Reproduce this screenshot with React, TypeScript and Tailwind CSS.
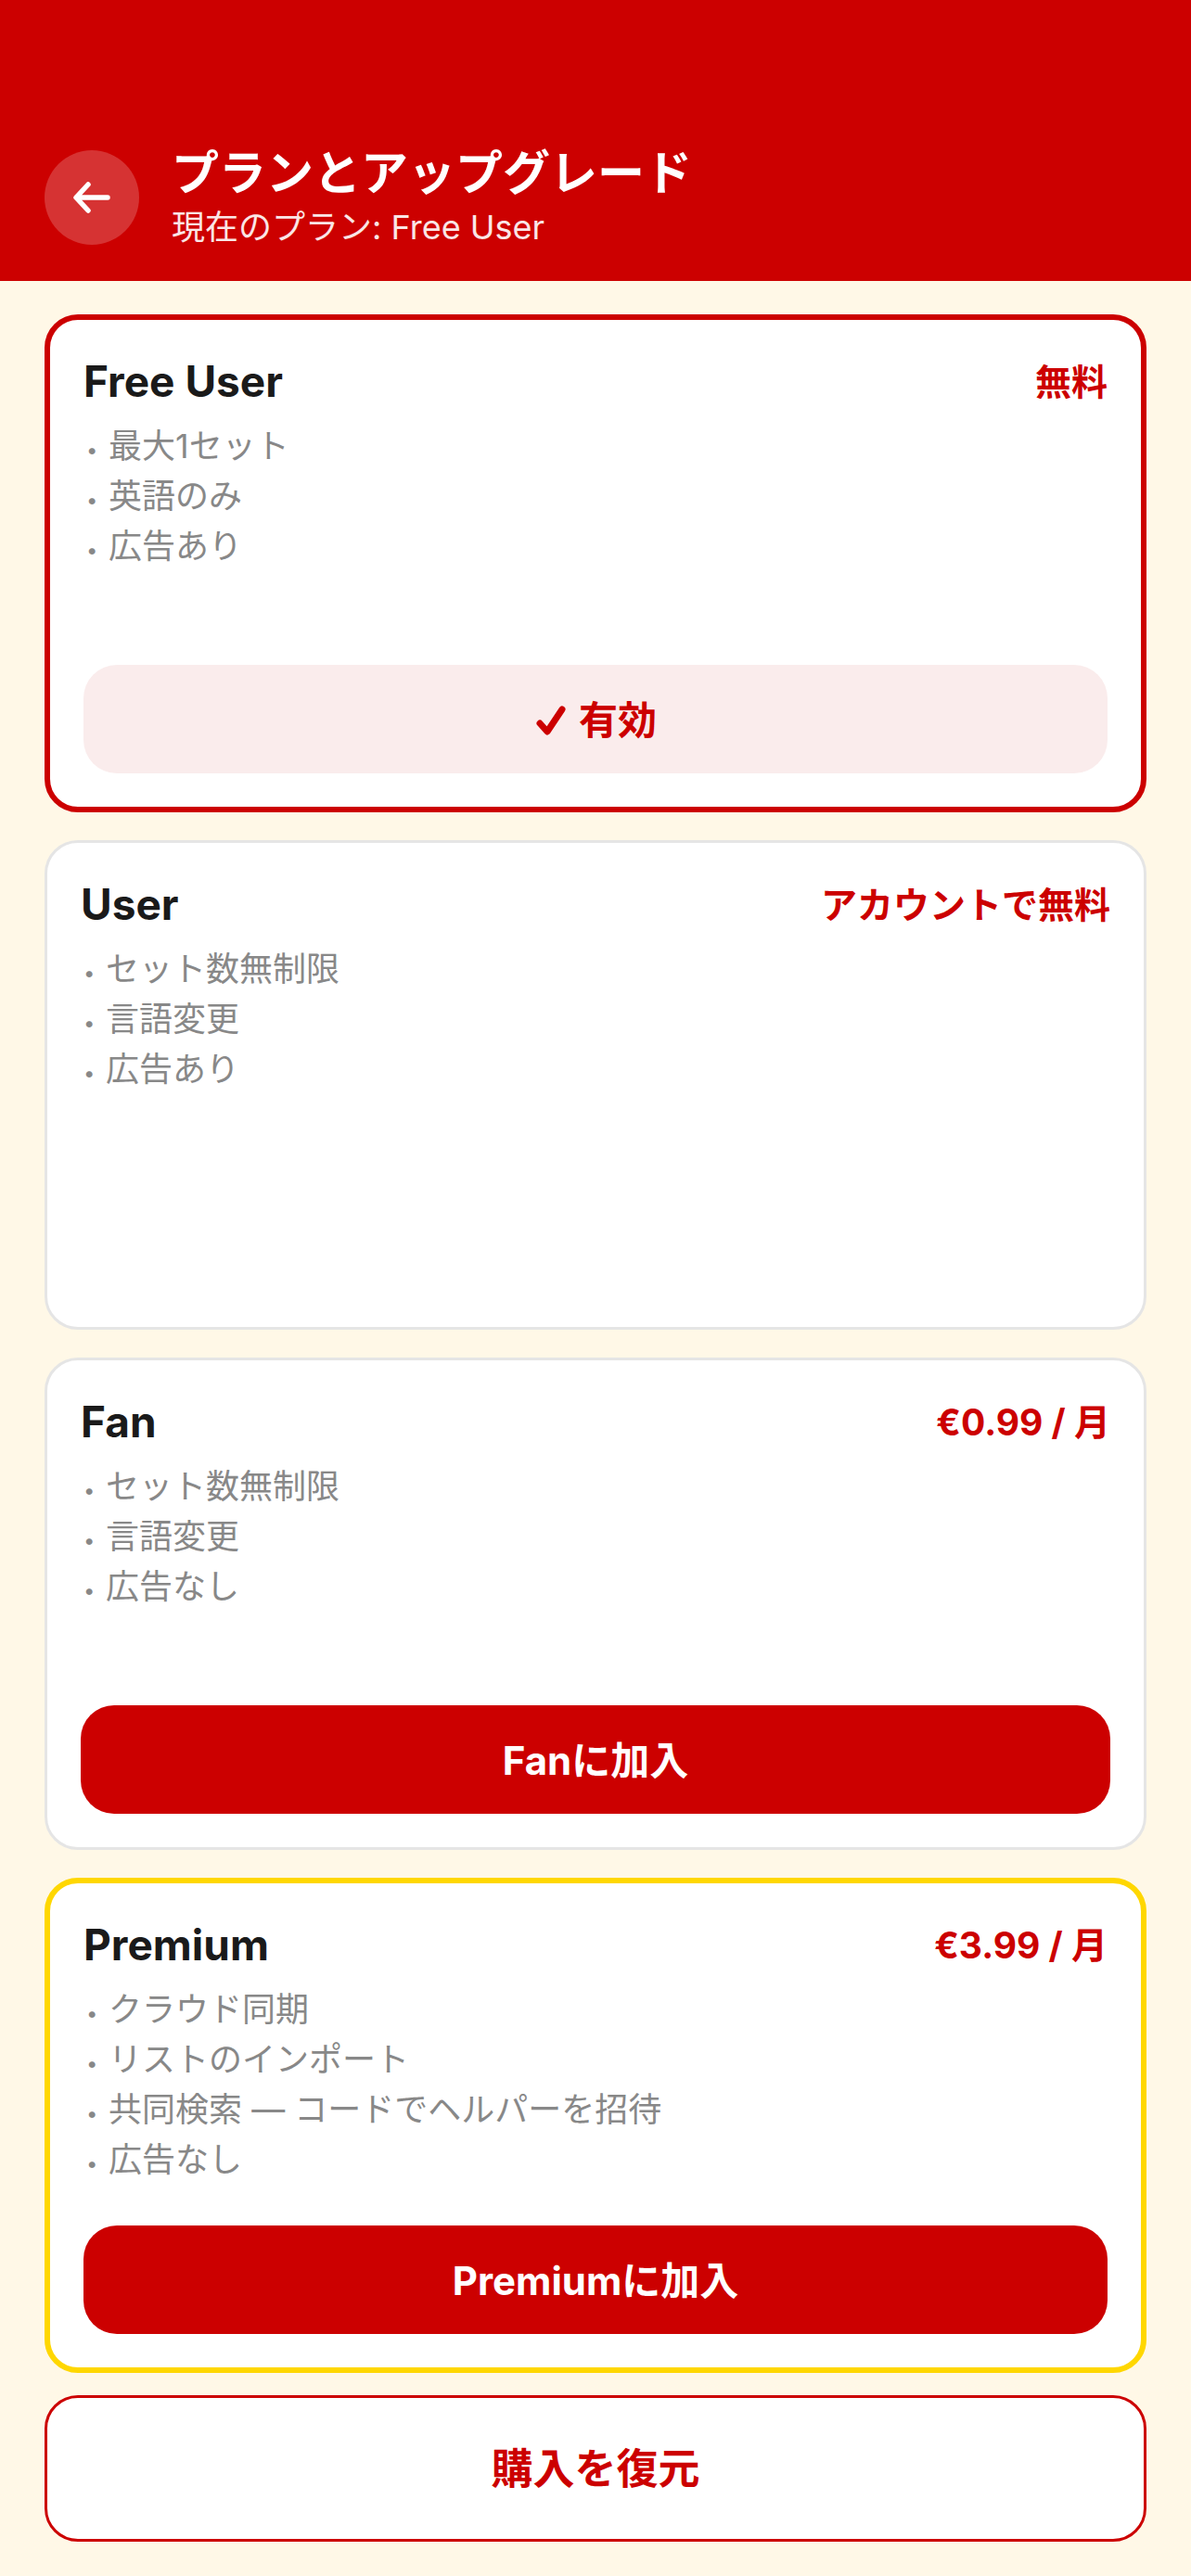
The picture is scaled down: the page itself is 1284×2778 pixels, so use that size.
import React from "react";

const FONT = "font-['Inter','Noto_Sans_CJK_JP',sans-serif]";

type Plan = {
  name: string;
  price: string;
  items: string[];
  border: string;
  height: string;
  button?: string;
  active?: boolean;
};

const plans: Plan[] = [
  {
    name: "Free User",
    price: "無料",
    items: ["最大1セット", "英語のみ", "広告あり"],
    border: "border-[6px] border-[#cc0000]",
    height: "h-[537px]",
    active: true,
  },
  {
    name: "User",
    price: "アカウントで無料",
    items: ["セット数無制限", "言語変更", "広告あり"],
    border: "border-[3px] border-[#e5e5e5]",
    height: "h-[528px]",
  },
  {
    name: "Fan",
    price: "€0.99 / 月",
    items: ["セット数無制限", "言語変更", "広告なし"],
    border: "border-[3px] border-[#e5e5e5]",
    height: "h-[531px]",
    button: "Fanに加入",
  },
  {
    name: "Premium",
    price: "€3.99 / 月",
    items: ["クラウド同期", "リストのインポート", "共同検索 — コードでヘルパーを招待", "広告なし"],
    border: "border-[6px] border-[#ffd700]",
    height: "h-[534px]",
    button: "Premiumに加入",
  },
];

const PlanCard = ({ plan }: { plan: Plan }) => (
  <div className={`flex flex-col rounded-[36px] bg-white p-9 ${plan.border} ${plan.height}`}>
    <div className="flex items-center justify-between">
      <span className="text-[46px] leading-[56px] font-[750] text-[#1a1a1a]">{plan.name}</span>
      <span className="pt-[3px] text-[39px] leading-[56px] font-bold text-[#cc0000]">{plan.price}</span>
    </div>
    <ul className="mt-[14px]">
      {plan.items.map((item) => (
        <li key={item} className="flex h-[54px] items-center text-[36px] text-[#888888]">
          <span className="w-[27px] pt-[8px] pl-[3px] text-[22px] leading-none">•</span>
          {item}
        </li>
      ))}
    </ul>
    {plan.active && (
      <div className="mt-auto flex h-[117px] items-center justify-center gap-[14px] rounded-[36px] bg-[#faecec] pt-[2px] pl-[2px]">
        <svg width="32" height="32" viewBox="0 0 32 32" fill="none" stroke="#cc0000" strokeWidth="7" strokeLinecap="round" strokeLinejoin="round">
          <path d="M4 19 L12 28 L28 4" />
        </svg>
        <span className="text-[42px] font-bold text-[#cc0000]">有効</span>
      </div>
    )}
    {plan.button && (
      <div className="mt-auto flex h-[117px] items-center justify-center rounded-[36px] bg-[#cc0000] pt-[2px]">
        <span className="text-[42px] font-bold text-white">{plan.button}</span>
      </div>
    )}
  </div>
);

export default function App() {
  return (
    <div className={`min-h-[2778px] bg-[#fff8e7] ${FONT}`}>
      <header className="flex h-[303px] items-end gap-[35px] bg-[#cc0000] px-12 pb-[39px]">
        <div className="flex h-[102px] w-[102px] items-center justify-center rounded-full bg-white/20">
          <svg width="40" height="34" viewBox="0 0 40 34" fill="none" stroke="white" strokeWidth="5.5" strokeLinecap="round" strokeLinejoin="round">
            <path d="M37 17 H4 M16 3 L3 17 L16 31" />
          </svg>
        </div>
        <div className="mb-[-5px] flex flex-col">
          <h1 className="mb-[2px] text-[51px] leading-[64px] font-bold text-white">プランとアップグレード</h1>
          <p className="text-[36px] leading-[48px] text-white/90">現在のプラン: Free User</p>
        </div>
      </header>
      <main className="flex flex-col gap-[30px] px-12 pt-9">
        {plans.map((plan) => (
          <PlanCard key={plan.name} plan={plan} />
        ))}
        <div className="-mt-[6px] flex h-[158px] items-center justify-center rounded-[36px] border-[3px] border-[#cc0000] bg-white pt-[2px]">
          <span className="text-[45px] font-bold text-[#cc0000]">購入を復元</span>
        </div>
      </main>
    </div>
  );
}
